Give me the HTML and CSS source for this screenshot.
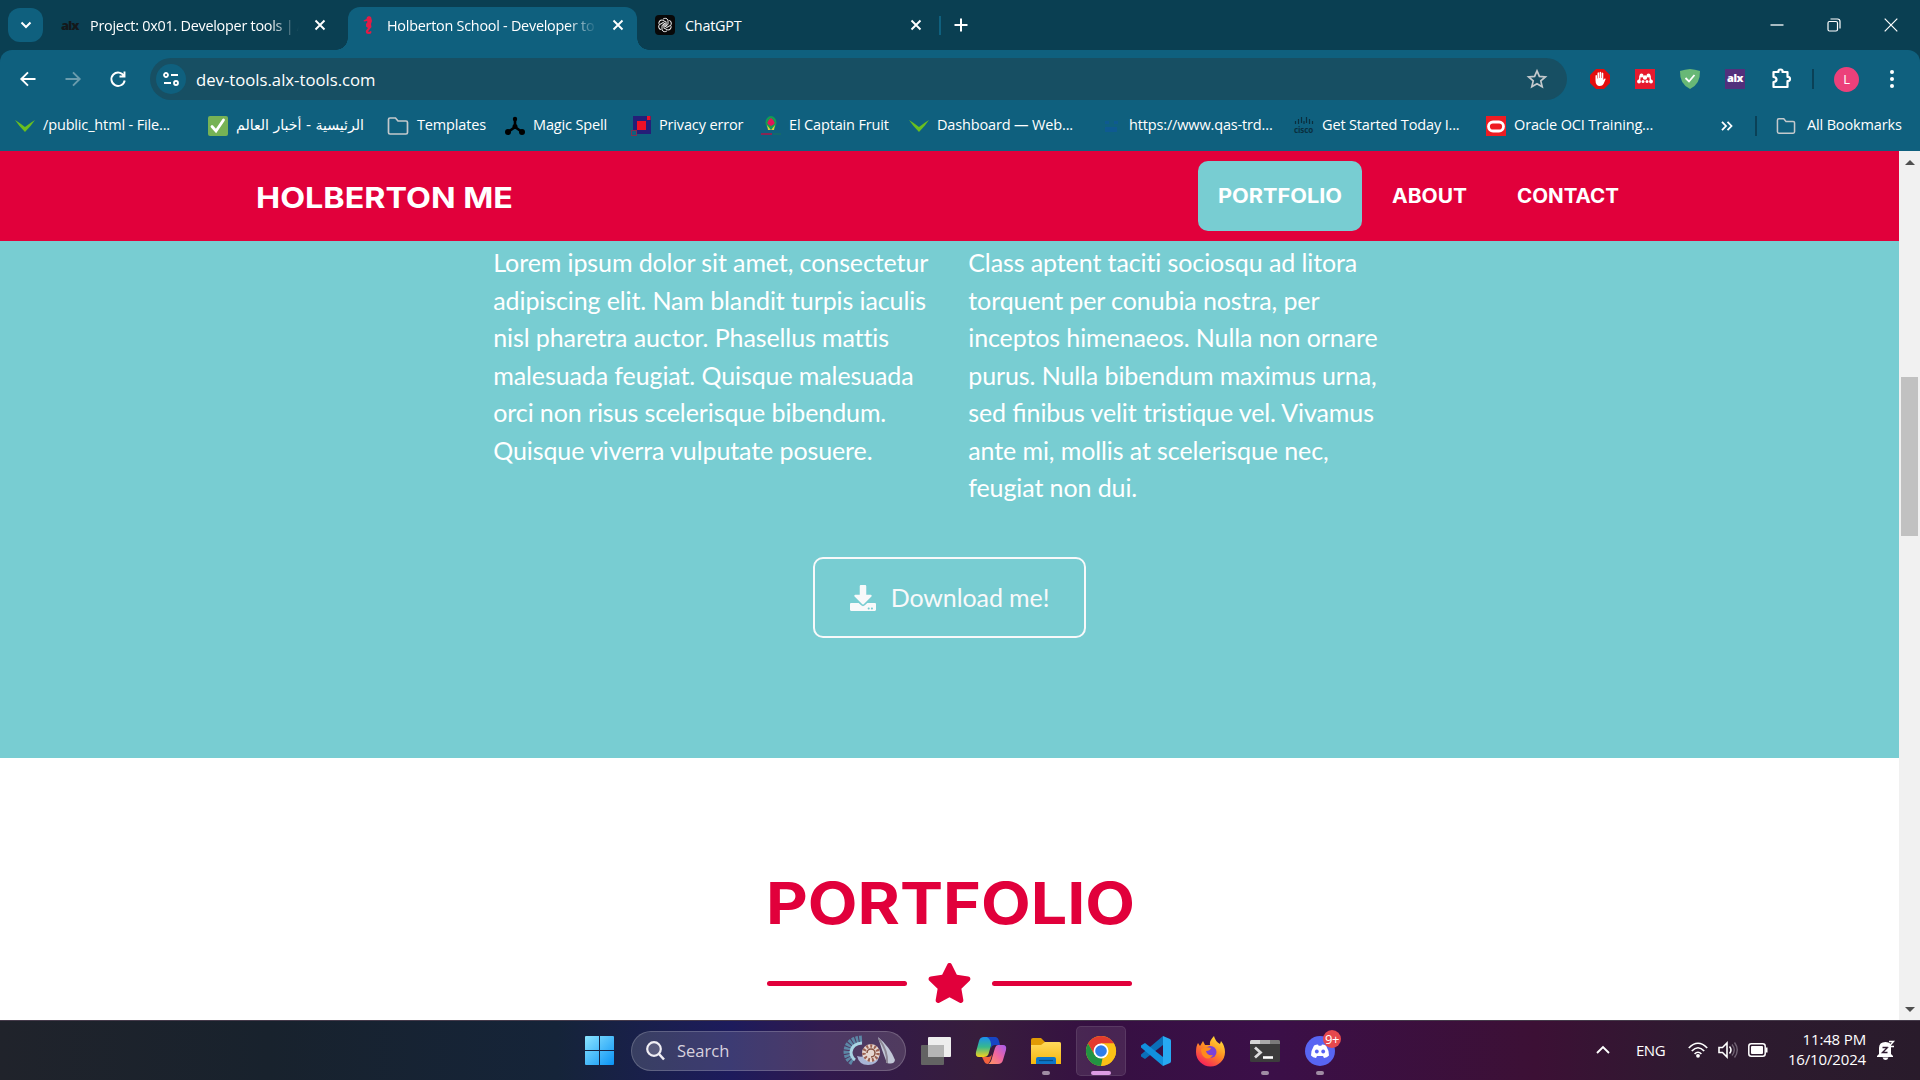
FILE: index.html
```html
<!DOCTYPE html>
<html lang="en">
<head>
<meta charset="utf-8">
<title>Holberton School - Developer tools</title>
<link rel="stylesheet" href="styles.css">
</head>
<body>
<svg width="0" height="0" class="defs">
  <defs>
    <symbol id="close" viewBox="0 0 12 12"><path d="M1.5 1.5l9 9M10.500 1.500l-9 9" stroke="#fff" stroke-width="1.900" fill="none"/></symbol>
    <symbol id="folder" viewBox="0 0 22 20"><path d="M1.500 3.500q0-1.500 1.500-1.500h5.500l2.500 3h8q1.500 0 1.500 1.500v10q0 1.500-1.500 1.500h-16q-1.500 0-1.500-1.500z" fill="none" stroke="#c4c9cc" stroke-width="1.700"/></symbol>
    <symbol id="vee" viewBox="0 0 20 14"><path d="M0 1Q5 4 10 8Q15 4 20 1Q16 7 10 13Q4 7 0 1z" fill="#6abf1f"/></symbol>
    <linearGradient id="win" x1="0" y1="0" x2="1" y2="1"><stop offset="0" stop-color="#8be4ff"/><stop offset="1" stop-color="#0a93f5"/></linearGradient>
    <linearGradient id="copA" x1="0" y1="0" x2="0" y2="1"><stop offset="0" stop-color="#1b8ff0"/><stop offset=".5" stop-color="#37b98c"/><stop offset="1" stop-color="#f7d21c"/></linearGradient>
    <linearGradient id="copB" x1="1" y1="0" x2="0" y2="1"><stop offset="0" stop-color="#a45cf0"/><stop offset=".5" stop-color="#ef65a0"/><stop offset="1" stop-color="#ff9a5c"/></linearGradient>
    <linearGradient id="fold" x1="0" y1="0" x2="0" y2="1"><stop offset="0" stop-color="#ffd95c"/><stop offset="1" stop-color="#f7b70c"/></linearGradient>
    <linearGradient id="fox" x1=".8" y1="0" x2=".2" y2="1"><stop offset="0" stop-color="#ffe53a"/><stop offset=".45" stop-color="#ff9022"/><stop offset="1" stop-color="#f5155f"/></linearGradient>
  </defs>
</svg>

<header class="browser">
  <div class="tabstrip">
    <span class="tab-search"><svg width="12" height="8" viewBox="0 0 12 8"><path d="M1.500 1.500L6 6l4.500-4.500" fill="none" stroke="#fff" stroke-width="2"/></svg></span>
    <div class="tab tab-first">
      <span class="alx-dark">alx</span><span class="tab-title fade-dark">Project: 0x01. Developer tools | A</span>
      <svg class="x" width="12" height="12"><use href="#close"/></svg>
    </div>
    <div class="tab tab-active">
      <svg class="seahorse" width="10" height="18" viewBox="0 0 10 18"><path d="M6 0l2 1 .5 2 .5 2-1 3 .5 3-2 2.500-1.500 2 1.500.5.500-1 1.500.5q0 2.500-2.500 2.500Q2 18 3 14.500L5 12 3 10.500 3 8 4.500 6 4 5 1 5.500.5 4.500 3.500 3 4 1z" fill="#e31b46"/></svg>
      <span class="tab-title fade-active">Holberton School - Developer to</span>
      <svg class="x" width="12" height="12"><use href="#close"/></svg>
    </div>
    <div class="tab tab-last">
      <svg width="20" height="20" viewBox="0 0 20 20"><rect width="20" height="20" rx="4" fill="#080808"/><g fill="none" stroke="#eee" stroke-width="1"><g id="knot"><path d="M8 4.200a3.200 3.200 0 0 1 5 .8v4.500l-3 1.800"/></g><use href="#knot" transform="rotate(60 10 10)"/><use href="#knot" transform="rotate(120 10 10)"/><use href="#knot" transform="rotate(180 10 10)"/><use href="#knot" transform="rotate(240 10 10)"/><use href="#knot" transform="rotate(300 10 10)"/></g></svg>
      <span class="tab-title">ChatGPT</span>
      <svg class="x" width="12" height="12"><use href="#close"/></svg>
    </div>
    <i class="tab-sep"></i>
    <svg class="new-tab" width="14" height="14" viewBox="0 0 14 14"><path d="M7 .5v13M.5 7h13" stroke="#fff" stroke-width="2"/></svg>
    <div class="window-buttons">
      <svg width="14" height="14" viewBox="0 0 14 14"><path d="M.5 7h13" stroke="#fff" stroke-width="1.300"/></svg>
      <svg width="14" height="14" viewBox="0 0 14 14"><rect x="1" y="3.500" width="9.500" height="9.500" rx="1.500" fill="none" stroke="#fff" stroke-width="1.200"/><path d="M3.500 1h7q2.500 0 2.500 2.500v7" fill="none" stroke="#fff" stroke-width="1.200"/></svg>
      <svg width="14" height="14" viewBox="0 0 14 14"><path d="M.7.7l12.600 12.600M13.300.7L.7 13.300" stroke="#fff" stroke-width="1.200"/></svg>
    </div>
  </div>

  <div class="toolbar">
    <div class="nav-buttons">
      <svg width="16" height="16" viewBox="0 0 16 16"><path d="M15.500 8H1.500M8 1.300L1.300 8 8 14.700" fill="none" stroke="#fff" stroke-width="1.900"/></svg>
      <svg width="16" height="16" viewBox="0 0 16 16"><path d="M.5 8h14M8 1.300L14.700 8 8 14.700" fill="none" stroke="#6b9cad" stroke-width="1.900"/></svg>
      <svg width="16" height="16" viewBox="0 0 16 16"><path d="M14 5A6.700 6.700 0 1 0 14.700 9.500M14.500.5v5h-5" fill="none" stroke="#fff" stroke-width="1.900"/></svg>
    </div>
    <div class="omnibox">
      <span class="site-info"><svg width="16" height="14" viewBox="0 0 16 14"><g fill="none" stroke="#fff" stroke-width="1.800"><circle cx="3" cy="3" r="2"/><path d="M8 3h7M1 11h7"/><circle cx="13" cy="11" r="2"/></g></svg></span>
      <span class="url">dev-tools.alx-tools.com</span>
      <svg width="20" height="20" viewBox="0 0 20 20"><path d="M10 1.800l2.400 5.600 6 .5-4.600 4 1.400 5.900L10 14.700l-5.200 3.100 1.400-5.900-4.600-4 6-.5z" fill="none" stroke="#c4c9cc" stroke-width="1.700"/></svg>
    </div>
    <div class="extensions">
      <svg width="20" height="20" viewBox="0 0 20 20"><path d="M6 0h8l6 6v8l-6 6H6l-6-6V6z" fill="#e40d0d"/><path d="M5.500 11V6.500q.8-1.200 1.500 0V9.500h.5V4q.8-1.300 1.600 0v5h.5V3.300q.8-1.300 1.600 0V9h.5V4.200q.8-1.300 1.600 0V11l1.300-1.500q1.200-.4 1 .7L13.500 15q-1 2-3.700 2-4.300 0-4.300-6z" fill="#fff"/></svg>
      <svg width="20" height="20" viewBox="0 0 20 20"><rect width="20" height="20" fill="#e6192e"/><g fill="#fff"><circle cx="6.500" cy="6.500" r="2"/><circle cx="13.500" cy="6.500" r="2"/><circle cx="10" cy="8.500" r="2.200"/><circle cx="4" cy="12.500" r="1.900"/><circle cx="16" cy="12.500" r="1.900"/><circle cx="8" cy="12.500" r="1.500"/><circle cx="12" cy="12.500" r="1.500"/></g><path d="M4 12q1-1.500 1-5M16 12q-1-1.500-1-5" fill="none" stroke="#fff" stroke-width="1.500"/></svg>
      <svg width="20" height="20" viewBox="0 0 20 20"><path d="M10 0q5 .3 10 2 .5 13-10 18Q-.5 15 0 2 5 .3 10 0z" fill="#68b876"/><path d="M5.500 9l3.500 3.500L14.500 6" fill="none" stroke="#fff" stroke-width="1.800"/></svg>
      <span class="alx-ext">alx</span>
      <svg width="22" height="22" viewBox="0 0 22 22"><path d="M3.500 4h5q-.5-2.500 2-2.500t2 2.500h5v5q2.500-.3 2.500 2t-2.500 2v6h-14v-5q3-.3 3-2.500T3.500 9z" fill="none" stroke="#fff" stroke-width="2.200" stroke-linejoin="round"/></svg>
      <i class="divider"></i>
      <span class="avatar">L</span>
      <svg width="4" height="18" viewBox="0 0 4 18"><g fill="#fff"><circle cx="2" cy="2" r="2"/><circle cx="2" cy="9" r="2"/><circle cx="2" cy="16" r="2"/></g></svg>
    </div>
  </div>

  <nav class="bookmarks">
    <span class="bm"><svg width="20" height="14"><use href="#vee"/></svg><span>/public_html - File...</span></span>
    <span class="bm"><svg width="20" height="20" viewBox="0 0 20 20"><rect width="20" height="20" rx="2" fill="#77b255"/><path d="M4 10.500l4 4.500 7.500-11" fill="none" stroke="#fff" stroke-width="2.800" stroke-linecap="round"/></svg><span class="arabic" dir="rtl">الرئيسية - أخبار العالم</span></span>
    <span class="bm"><svg width="22" height="20"><use href="#folder"/></svg><span>Templates</span></span>
    <span class="bm"><svg width="20" height="20" viewBox="0 0 20 20"><path d="M10 3v8L3 16M10 11l7 5" stroke="#000" stroke-width="2.600" fill="none"/><circle cx="10" cy="3" r="2.200"/><circle cx="3" cy="16" r="3"/><circle cx="17" cy="16" r="3"/><circle cx="10" cy="10.500" r="2.500"/></svg><span>Magic Spell</span></span>
    <span class="bm"><svg width="20" height="20" viewBox="0 0 20 20"><path d="M2 0h18v18H6v-4H2z" fill="#251e78"/><rect x="6" y="5" width="9" height="9" fill="#ee1026"/><rect x="16" y="0" width="3.500" height="4" fill="#ee1026"/><rect x=".5" y="14.500" width="5" height="5" fill="#0f607e" stroke="#7b3050"/></svg><span>Privacy error</span></span>
    <span class="bm"><svg width="20" height="20" viewBox="0 0 20 20"><ellipse cx="10" cy="6.500" rx="5.500" ry="6.500" fill="#149b54"/><path d="M10 2q7 5 0 8-7-3 0-8" fill="#e11659"/><path d="M6 9l4 5 4-5-1 5H7z" fill="#d5d33a"/><path d="M0 18h11" stroke="#872754" stroke-width="2"/><path d="M12 18h8" stroke="#18745b" stroke-width="1"/></svg><span>El Captain Fruit</span></span>
    <span class="bm"><svg width="20" height="14"><use href="#vee"/></svg><span>Dashboard — Web...</span></span>
    <span class="bm"><svg width="20" height="20" viewBox="0 0 20 20"><path d="M4 5h4v3H4zM13 5h4v3h-4zM4 11h12v5H4z" fill="#0e5a91"/></svg><span>https://www.qas-trd...</span></span>
    <span class="bm"><svg width="20" height="20" viewBox="0 0 20 20"><path d="M1.500 5v3M4.500 3v5M7.500 1v6M10 5v3M12.500 1v6M15.500 3v5M18.500 5v3" stroke="#0a2f3e" stroke-width="1.200"/><text x="0" y="16.500" textLength="19" lengthAdjust="spacingAndGlyphs" font-family="Open Sans, sans-serif" font-weight="700" font-size="9" fill="#0a2f3e">cisco</text></svg><span>Get Started Today I...</span></span>
    <span class="bm"><svg width="20" height="20" viewBox="0 0 20 20"><rect width="20" height="20" fill="#ee1c22"/><rect x="2.500" y="6" width="15" height="9" rx="4.500" fill="none" stroke="#fff" stroke-width="2.800"/></svg><span>Oracle OCI Training...</span></span>
    <svg width="12" height="10" viewBox="0 0 12 10"><path d="M1 .8L5 5 1 9.200M6.500.8l4 4.200-4 4.200" fill="none" stroke="#fff" stroke-width="1.800"/></svg>
    <i class="divider"></i>
    <span class="bm all"><svg width="20" height="18"><use href="#folder"/></svg><span>All Bookmarks</span></span>
  </nav>
</header>

<main class="viewport">
  <div class="site">
    <nav class="site-nav">
      <a class="brand"><svg width="270" height="40"><text x="0" y="32" textLength="257" lengthAdjust="spacingAndGlyphs">HOLBERTON ME</text></svg></a>
      <a class="link active"><svg width="124" height="30"><text x="0" y="22" textLength="124" lengthAdjust="spacingAndGlyphs">PORTFOLIO</text></svg></a>
      <a class="link"><svg width="76" height="30"><text x="0" y="22" textLength="75" lengthAdjust="spacingAndGlyphs">ABOUT</text></svg></a>
      <a class="link"><svg width="102" height="30"><text x="-1" y="22" textLength="102" lengthAdjust="spacingAndGlyphs">CONTACT</text></svg></a>
    </nav>
    <section class="about">
      <div class="columns">
        <p>Lorem ipsum dolor sit amet, consectetur adipiscing elit. Nam blandit turpis iaculis nisl pharetra auctor. Phasellus mattis malesuada feugiat. Quisque malesuada orci non risus scelerisque bibendum. Quisque viverra vulputate posuere.</p>
        <p>Class aptent taciti sociosqu ad litora torquent per conubia nostra, per inceptos himenaeos. Nulla non ornare purus. Nulla bibendum maximus urna, sed <span class="ligature">fi</span>nibus velit tristique vel. Vivamus ante mi, mollis at scelerisque nec, feugiat non dui.</p>
      </div>
      <a class="download"><svg width="26" height="26" viewBox="0 0 512 512"><path fill="#f8f9fa" d="M216 0h80c13.300 0 24 10.700 24 24v168h87.700c17.800 0 26.700 21.500 14.100 34.100L269.700 378.300c-7.500 7.500-19.800 7.500-27.300 0L90.100 226.100c-12.600-12.600-3.700-34.100 14.100-34.100H192V24c0-13.300 10.700-24 24-24zm296 376v112c0 13.300-10.700 24-24 24H24c-13.300 0-24-10.700-24-24V376c0-13.300 10.700-24 24-24h146.700l49 49c20.100 20.100 52.500 20.100 72.600 0l49-49H488c13.300 0 24 10.700 24 24zm-124 88c0-11-9-20-20-20s-20 9-20 20 9 20 20 20 20-9 20-20zm64 0c0-11-9-20-20-20s-20 9-20 20 9 20 20 20 20-9 20-20z"/></svg>Download me!</a>
    </section>
    <section class="portfolio">
      <svg class="heading" width="372" height="80"><text x="2" y="62" textLength="369" lengthAdjust="spacingAndGlyphs">PORTFOLIO</text></svg>
      <div class="rule"><i></i><svg width="45" height="40" viewBox="0 0 576 512"><path fill="#e1003b" d="M259.300 17.800L194 150.200 47.900 171.500c-26.200 3.800-36.700 36.100-17.700 54.600l105.700 103-25 145.500c-4.500 26.300 23.200 46 46.400 33.700L288 439.600l130.700 68.700c23.200 12.200 50.900-7.400 46.400-33.700l-25-145.500 105.700-103c19-18.500 8.500-50.800-17.700-54.600L382 150.200 316.700 17.800c-11.700-23.600-45.600-23.900-57.400 0z"/></svg><i></i></div>
    </section>
  </div>
  <aside class="scrollbar"><i class="up"></i><i class="thumb"></i><i class="down"></i></aside>
</main>

<footer class="taskbar">
  <svg width="29" height="29" viewBox="0 0 29 29"><path d="M0 1q0-1 1-1h13v14H0zM15 0h13q1 0 1 1v13H15zM0 15h14v14H1q-1 0-1-1zM15 15h14v13q0 1-1 1H15z" fill="url(#win)"/></svg>
  <div class="search"><svg width="19" height="20" viewBox="0 0 19 20"><circle cx="8" cy="8" r="6.800" fill="#8a86a0" fill-opacity=".4" stroke="#f0eef4" stroke-width="2.200"/><path d="M13 13l5 5.500" stroke="#f0eef4" stroke-width="2.600"/></svg><span>Search</span>
    <svg width="54" height="28" viewBox="0 0 54 28"><path d="M20 2Q6 3 5 14q0 8 6 11" fill="none" stroke="#5c87a6" stroke-width="7" stroke-dasharray="2.500 1"/><path d="M20 6Q10 7 9 15q0 5 4 8" fill="none" stroke="#a9d4e3" stroke-width="3"/><path d="M15 19q9 3 12-6 10-2 10 7-2 8-11 8-9 0-11-9z" fill="#a9b6d6"/><circle cx="29" cy="16" r="9" fill="#e5d6d0"/><circle cx="29" cy="16" r="7" fill="none" stroke="#9b6152" stroke-width="3.500" stroke-dasharray="2 2"/><path d="M25 16a4 4 0 1 1 4 4" fill="none" stroke="#84503f" stroke-width="1.500"/><path d="M36 0q12 10 17 23-1 5-8 3Q40 14 36 0z" fill="#c2c8d7"/><path d="M37 2q9 12 8 24" fill="none" stroke="#8c8794" stroke-width="2"/></svg>
  </div>
  <svg width="30" height="28" viewBox="0 0 30 28"><rect y="8" width="23" height="20" rx="1" fill="#636363"/><rect x="7" width="23" height="20" rx="1" fill="#eee"/><path d="M7 8h16v12H7z" fill="#b5b5b5"/></svg>
  <svg width="30" height="28" viewBox="0 0 30 28"><path d="M8 0h12q-3 1-4.500 7l-3 10q-1 3-5 3H3q-4 0-3-5L3 4q1-4 5-4z" fill="url(#copA)"/><path d="M11 0h8q3 0 4 4l1 4h-5q-3 0-4 3 1-8-4-11z" fill="#1745c4"/><path d="M22 8h5q4 0 3 5l-3 10q-1 4-5 4H12q3-1 4-6l3-10q1-3 3-3z" fill="url(#copB)"/><path d="M6 20h6q3 0 4-3-1 7-4 10-3 0-4-3z" fill="#f2623e"/></svg>
  <span class="app"><svg width="30" height="30" viewBox="0 0 30 30"><path d="M0 4q0-2 2-2h8l4 4h14q2 0 2 2v6H0z" fill="#e09a05"/><path d="M0 9h10l4-3h14q2 0 2 2v20H0z" fill="url(#fold)"/><path d="M5 28v-5q0-2 2-2h16q2 0 2 2v5z" fill="#0d76c9"/><path d="M8 24.500h14" stroke="#074e86" stroke-width="1.200"/></svg><i></i></span>
  <span class="app current"><svg width="30" height="30" viewBox="0 0 30 30"><circle cx="15" cy="15" r="15" fill="#fbc116"/><path d="M2 7.500A15 15 0 0 1 28 7.500H15L8.500 18.800z" fill="#e33b2e"/><path d="M2 7.500l6.500 11.300q4 4 8 3.500L15 30A15 15 0 0 1 2 7.500z" fill="#229342"/><path d="M28 7.500H15v5l6.500 6.300L15 30A15 15 0 0 0 28 7.500z" fill="#fbc116"/><circle cx="15" cy="15" r="7.500" fill="#fff"/><circle cx="15" cy="15" r="5.800" fill="#2f7de9"/></svg><i></i></span>
  <svg width="30" height="30" viewBox="0 0 30 30"><path d="M22 0v9L4 23 0 20.500v-2z" fill="#0b6fb8"/><path d="M22 30v-9L4 7 0 9.500v2z" fill="#1190dd"/><path d="M22 0l7 3q1 .5 1 2v20q0 1.500-1 2l-7 3z" fill="#27a9f2"/></svg>
  <svg width="29" height="30" viewBox="0 0 29 30"><path d="M2 7l2 3 3-5 2 4h5q-1-4 4-9 1 5 6 8l1-3q4 5 4 11A14.300 14.300 0 0 1 0 16Q0 10 2 7z" fill="url(#fox)"/><circle cx="14.500" cy="16" r="6" fill="#7a42d8"/><path d="M5 13q5-3 10-1-1 3-5 3 1 5 7 4-4 6-9 2-3-3-3-8z" fill="#ff8a1c"/></svg>
  <span class="app"><svg width="30" height="22" viewBox="0 0 30 22"><rect width="30" height="22" rx="1.500" fill="#3c3c3c"/><path d="M0 4V1.500Q0 0 1.500 0H20v4z" fill="#d4d4d4"/><path d="M10 0h10v4H10z" fill="#a9a9a9"/><path d="M20 0h8.500Q30 0 30 1.500V4H20z" fill="#7a7a7a"/><path d="M5 7.500l5.500 5-5.500 5" fill="none" stroke="#ddd" stroke-width="2.800"/><path d="M13 17.500h10" stroke="#fff" stroke-width="2.600"/></svg><i></i></span>
  <span class="app"><svg width="30" height="30" viewBox="0 0 30 30"><circle cx="15" cy="15" r="15" fill="#5865f2"/><path d="M9 9.500q2-1 4-1l.7 1.300h2.600L17 8.500q2 0 4 1 3 5 3 10-2 2-5 2.500l-1-2h-6l-1 2q-3-.5-5-2.500 0-5 3-10z" fill="#fff"/><circle cx="11.800" cy="15.500" r="1.900" fill="#5865f2"/><circle cx="18.200" cy="15.500" r="1.900" fill="#5865f2"/></svg><i></i><b class="badge">9+</b></span>
  <div class="tray">
    <svg width="14" height="9" viewBox="0 0 14 9"><path d="M1 8l6-6 6 6" fill="none" stroke="#fff" stroke-width="1.900"/></svg>
    <span class="lang">ENG</span>
    <svg width="20" height="16" viewBox="0 0 20 16"><g fill="none" stroke="#fff" stroke-width="1.700"><path d="M.8 6q9.200-9.500 18.400 0M3.800 9q6.200-6.500 12.400 0M6.600 12q3.400-3.500 6.800 0"/></g><circle cx="10" cy="13.800" r="1.900" fill="#fff"/></svg>
    <svg width="20" height="18" viewBox="0 0 20 18"><path d="M1 6.500h3.500L9 2v14l-4.500-4.500H1z" fill="none" stroke="#fff" stroke-width="1.600"/><path d="M11.500 5.500q3 3.500 0 7" fill="none" stroke="#fff" stroke-width="1.500"/><path d="M14 3.500q4.500 5.500 0 11M16.500 1.500q5.500 7.500 0 15" fill="none" stroke="#6f6172" stroke-width="1.400"/></svg>
    <svg width="20" height="14" viewBox="0 0 20 14"><rect x=".8" y=".8" width="16.400" height="12.400" rx="2.500" fill="none" stroke="#fff" stroke-width="1.500"/><rect x="3" y="3" width="12" height="8" rx="1" fill="#fff"/><path d="M18 4.500h1.500v5H18z" fill="#fff"/></svg>
    <span class="clock">11:48 PM<br>16/10/2024</span>
    <svg width="18" height="20" viewBox="0 0 18 20"><path d="M2 14V8q0-6 6.500-6T14 8v6l2 2v1H0v-1z" fill="#fff"/><path d="M5.500 17.500h6q-1 2.500-3 2.500t-3-2.500z" fill="#fff"/><path d="M5.500 7.500h5l-5 5h5" fill="none" stroke="#2e1a30" stroke-width="1.400"/><path d="M12 1.500h4.500l-4.500 5H17" fill="none" stroke="#fff" stroke-width="1.400"/></svg>
  </div>
</footer>
</body>
</html>
```
FILE: styles.css
```css
* { box-sizing: border-box; }
body { margin: 0; width: 1920px; height: 1080px; overflow: hidden; display: flex; flex-direction: column; font-family: "Open Sans", "DejaVu Sans", sans-serif; font-size: 14px; color: #fff; background: #fff; }
svg { display: block; flex: none; overflow: visible; }
i { display: block; flex: none; }
.defs { position: absolute; }

/* browser chrome */
.browser { height: 151px; background: linear-gradient(#0a3f52 62px, #0f607e 62px); flex: none; white-space: nowrap; font-size: 14.500px; letter-spacing: -0.15px; }
.tabstrip { height: 50px; background: #0a3f52; display: flex; align-items: center; padding-left: 8px; font-size: 14.400px; letter-spacing: -0.25px; }
.tab-search { width: 35px; height: 34px; border-radius: 12px; background: #0f607e; display: flex; align-items: center; justify-content: center; }
.tab { display: flex; align-items: center; height: 43px; align-self: flex-end; padding-bottom: 7px; }
.tab-first { width: 305px; padding-left: 18px; }
.tab-first .tab-title { margin-left: 11px; width: 211px; }
.alx-dark { width: 18px; color: #14191b; font: 800 13px/18px "Open Sans", sans-serif; letter-spacing: -1px; }
.tab-active { position: relative; width: 289px; background: #0f607e; border-radius: 12px 12px 0 0; padding-left: 15px; }
.tab-active::before, .tab-active::after { content: ""; position: absolute; bottom: 0; width: 12px; height: 12px; }
.tab-active::before { left: -12px; background: radial-gradient(circle at 0 0, #0a3f52 11.500px, #0f607e 12px); }
.tab-active::after { right: -12px; background: radial-gradient(circle at 100% 0, #0a3f52 11.500px, #0f607e 12px); }
.tab-active .tab-title { margin-left: 14px; width: 212px; }
.tab-last { width: 302px; padding-left: 18px; }
.tab-last .tab-title { margin-left: 10px; width: 212px; }
.tab-title { overflow: hidden; }
.fade-dark, .fade-active { -webkit-mask-image: linear-gradient(90deg, #000 85%, transparent 99%); mask-image: linear-gradient(90deg, #000 85%, transparent 99%); }
.tab .x { margin-left: 13px; }
.tab-sep { width: 2px; height: 19px; background: #0f607e; }
.new-tab { margin-left: 13px; }
.window-buttons { margin-left: auto; display: flex; gap: 43px; padding-right: 22px; margin-bottom: 1px; }

.toolbar { height: 58px; display: flex; align-items: center; padding-left: 20px; background: #0f607e; border-radius: 12px 12px 0 0; }
.nav-buttons { display: flex; gap: 29px; width: 130px; }
.omnibox { width: 1417px; height: 42px; border-radius: 21px; background: #174f63; display: flex; align-items: center; padding: 0 20px 0 6px; }
.site-info { width: 30px; height: 30px; border-radius: 50%; background: #0f607e; display: flex; align-items: center; justify-content: center; }
.url { margin-left: 10px; font-size: 16.700px; letter-spacing: 0; flex: 1; }
.extensions { display: flex; align-items: center; padding-left: 23px; gap: 25px; }
.alx-ext { width: 20px; height: 20px; background: #52307c; font: 800 11px/18px "Open Sans", sans-serif; text-align: center; letter-spacing: -0.5px; }
.divider { width: 2px; height: 20px; background: #0a4157; }
.extensions .divider { margin-left: -5px; margin-right: -5px; }
.avatar { width: 25px; height: 25px; border-radius: 50%; background: #ec407a; text-align: center; line-height: 25px; font-size: 13px; }
.extensions .avatar + svg { margin-left: 6px; }

.bookmarks { height: 35px; display: grid; align-items: center; padding-left: 15px; grid-template-columns: 193px 179px 118px 126px 130px 148px 192px 193px 192px 235px 34px 21px 140px; }
.bm { display: flex; align-items: center; gap: 8px; }
.bm > span { position: relative; top: -1px; }
.all { gap: 11px; }
.arabic { font: 14.100px "DejaVu Sans", sans-serif; letter-spacing: 0; }

/* web page */
.viewport { height: 869px; display: flex; flex: none; }
.site { width: 1899px; height: 869px; overflow: hidden; background: #fff; }
.site-nav { height: 90px; background: #e1003b; display: flex; align-items: center; padding-left: 256px; }
.site-nav text, .heading text { font-family: Inter, sans-serif; font-weight: 700; fill: #fff; }
.brand text { font-size: 29px; }
.brand { width: 942px; }
.link { height: 70px; padding: 0 20px; display: flex; align-items: center; margin-right: 10px; }
.link text { font-size: 19.400px; }
.active { background: #78cdd2; border-radius: 10px; }
.about { height: 517px; background: #78cdd2; padding-top: 3px; display: flex; flex-direction: column; align-items: center; font: 25px/37.500px Lato, sans-serif; letter-spacing: -0.1px; font-variant-ligatures: none; }
.columns { display: grid; grid-template-columns: 437.500px 437.500px; gap: 37.500px; height: 313px; }
.columns p { margin: 0; }
.ligature { letter-spacing: 0; font-variant-ligatures: common-ligatures; }
.download { width: 273px; height: 81px; border: 2px solid #f8f9fa; border-radius: 10px; color: #f8f9fa; display: flex; align-items: center; justify-content: center; gap: 15px; }
.portfolio { display: flex; flex-direction: column; align-items: center; padding-top: 104px; }
.heading text { font-size: 58px; fill: #e1003b; }
.rule { display: flex; align-items: center; gap: 20px; margin-top: 21px; }
.rule i { width: 140px; height: 5px; border-radius: 3px; background: #e1003b; }
.scrollbar { width: 21px; background: #f1f1f1; display: flex; flex-direction: column; align-items: center; padding: 9px 0 8px; }
.up, .down { width: 0; height: 0; border: 5px solid transparent; }
.up { border-top: 0; border-bottom-color: #505050; }
.down { border-bottom: 0; border-top-color: #505050; margin-top: auto; }
.thumb { width: 17px; height: 159px; margin-top: 212px; background: #c1c1c1; }

/* taskbar */
.taskbar { height: 60px; position: relative; border-top: 1px solid #453a4a; display: flex; align-items: center; padding-left: 585px; flex: none; background: linear-gradient(90deg, #20232b 0, #18222d 14%, #152439 29%, #1d1b5c 38%, #31194d 43%, #371d3c 51%, #361042 57%, #3b0f48 66%, #3c1035 80%, #2e1a30 88%, #291b2b 100%); }
.search { width: 275px; height: 40px; margin: 0 15px 0 17px; border-radius: 20px; border: 1px solid #ffffff30; background: #ffffff24; display: flex; align-items: center; padding-left: 14px; }
.search span { font-size: 16.500px; color: #d8d2de; margin-left: 12px; width: 165px; }
.taskbar > svg + svg { margin-left: 25px; }
.app { position: relative; width: 50px; height: 50px; display: flex; align-items: center; justify-content: center; margin-left: 15px; border-radius: 5px; }
.app + .app { margin-left: 5px; }
.app + svg { margin-left: 15px; }
.app i { position: absolute; left: 21px; bottom: 1px; width: 8px; height: 4px; border-radius: 2px; background: #a08ca4; }
.current { background: #ffffff17; border: 1px solid #ffffff18; }
.current i { left: 14px; bottom: 0; width: 20px; background: #dc9be4; }
.badge { position: absolute; left: 28px; top: 4px; width: 18px; height: 18px; border-radius: 50%; background: #e5484d; font: 13px/18px "Open Sans", sans-serif; text-align: center; letter-spacing: -0.5px; }
.tray { margin-left: auto; display: grid; align-items: center; grid-template-columns: 40px 52px 30px 30px 28px 90px 28px; padding: 0 26px 2px 0; }
.tray svg:last-child { margin-left: 11px; }
.lang { font-size: 15px; letter-spacing: -0.5px; }
.clock { text-align: right; font-size: 15px; line-height: 20px; letter-spacing: -0.15px; margin-bottom: 2px; }
```
